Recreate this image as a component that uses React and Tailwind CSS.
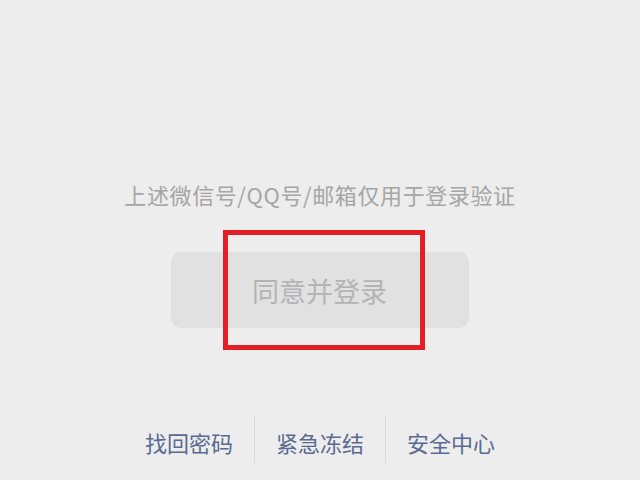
export default function App() {
  const font = { fontFamily: '"Noto Sans CJK SC", "Noto Sans", sans-serif' };
  return (
    <div className="w-[640px] h-[480px] bg-[#ededed] flex flex-col items-center overflow-hidden" style={font}>
      <div className="mt-[179px] h-[30px] leading-[30px] text-[22px] tracking-[0.6px] text-[#a5a5a5] whitespace-nowrap">
        上述微信号/QQ号/邮箱仅用于登录验证
      </div>
      <div className="relative mt-[43px] ml-[-1px] w-[298px] h-[76px] rounded-[10px] bg-[#e1e1e1] flex items-center justify-center">
        <span className="text-[27px] text-[#b4b4b4] leading-none">同意并登录</span>
        <div className="absolute left-[52px] top-[-22px] w-[202px] h-[120px] border-[5px] border-[#e31e25]" />
      </div>
      <div className="mt-[87px] flex">
        <div className="h-[48px] px-[21px] flex items-center pt-[5px] text-[22px] text-[#5a6a92] leading-none">找回密码</div>
        <div className="h-[48px] px-[21px] flex items-center pt-[5px] text-[22px] text-[#5a6a92] leading-none border-l border-[#dadada]">紧急冻结</div>
        <div className="h-[48px] px-[21px] flex items-center pt-[5px] text-[22px] text-[#5a6a92] leading-none border-l border-[#dadada]">安全中心</div>
      </div>
    </div>
  );
}
